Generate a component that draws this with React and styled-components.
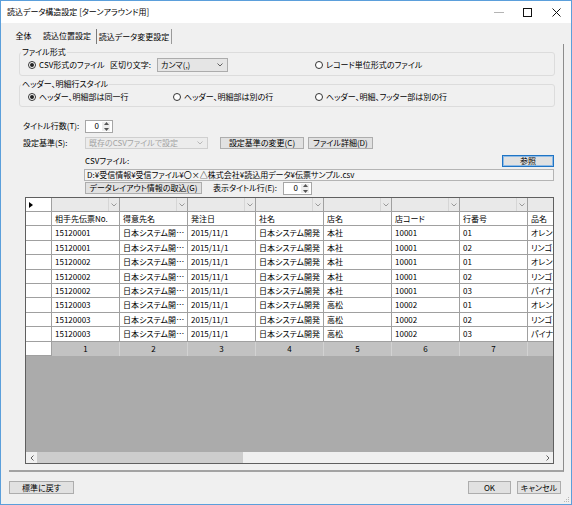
import React from "react";
import styled, { createGlobalStyle, css } from "styled-components";

const GlobalStyle = createGlobalStyle`
  html, body { margin: 0; padding: 0; background: #ffffff; }
  body {
    font-family: "Noto Sans CJK JP", "Noto Sans", sans-serif;
    font-size: 8px;
    line-height: 10px;
    color: #000;
    font-feature-settings: "palt" 1;
  }
  * { box-sizing: border-box; }
`;

const Window = styled.div`
  position: relative;
  width: 572px;
  height: 505px;
  border: 1px solid #5b9fdb;
  background: #f0f0f0;
  display: flex;
  flex-direction: column;
  overflow: hidden;
`;

const TitleBar = styled.div`
  height: 22px;
  flex: none;
  background: #ffffff;
  display: flex;
  align-items: center;
  padding-left: 6px;
`;

const Title = styled.div`
  flex: 1;
  white-space: nowrap;
`;

const Caption = styled.div`
  display: flex;
  height: 100%;
`;

const CaptionBtn = styled.div`
  width: ${(p) => p.$w}px;
  display: flex;
  align-items: center;
  justify-content: center;
`;

const TabStrip = styled.div`
  display: flex;
  height: 17px;
  flex: none;
  margin: 4px 0 0 8px;
`;

const Tab = styled.div`
  width: ${(p) => p.$w}px;
  display: flex;
  align-items: center;
  justify-content: center;
  white-space: nowrap;
  ${(p) =>
    p.$boxed &&
    css`
      margin-top: 2px;
      border-left: 1px solid #7a7a7a;
      border-right: 1px solid #9a9a9a;
    `}
`;

const Panel = styled.div`
  height: 428px;
  flex: none;
  margin: 0 7px 0 8px;
  border-right: 1px solid #8c8c8c;
  border-bottom: 2px solid #a3a3a3;
  padding: 3px 8px 0 10px;
  display: flex;
  flex-direction: column;
`;

const Group = styled.fieldset`
  margin: ${(p) => p.$mt}px 0 0;
  padding: ${(p) => p.$pt}px 0 ${(p) => p.$pb}px 8px;
  border: 1px solid #dcdcdc;
  border-radius: 3px;
  min-width: 0;
`;

const Legend = styled.legend`
  padding: 0 1px;
  margin-left: -7px;
  line-height: 10px;
`;

const RadioGrid = styled.div`
  display: grid;
  grid-template-columns: 145px 142px 1fr;
  align-items: center;
  height: ${(p) => p.$h}px;
`;

const FlexCell = styled.div`
  grid-column: span ${(p) => p.$span || 1};
  display: flex;
  align-items: center;
`;

const RadioLabel = styled.label`
  display: inline-flex;
  align-items: center;
  gap: 3px;
  white-space: nowrap;
  width: ${(p) => (p.$w ? `${p.$w}px` : "auto")};
`;

const RadioDot = styled.span`
  width: 8px;
  height: 8px;
  border-radius: 50%;
  border: 1px solid #333;
  background: #fff;
  display: flex;
  align-items: center;
  justify-content: center;
  &::after {
    content: "";
    width: 4px;
    height: 4px;
    border-radius: 50%;
    background: ${(p) => (p.$checked ? "#222" : "transparent")};
  }
`;

const InlineLabel = styled.span`
  width: ${(p) => p.$w}px;
  white-space: nowrap;
`;

const Select = styled.div`
  width: ${(p) => p.$w}px;
  height: ${(p) => p.$h}px;
  border: 1px solid ${(p) => (p.$disabled ? "#cfcfcf" : "#acacac")};
  background: ${(p) => (p.$disabled ? "#ececec" : "#e5e5e5")};
  color: ${(p) => (p.$disabled ? "#a3a3a3" : "#000")};
  display: flex;
  align-items: center;
  justify-content: space-between;
  padding: 0 4px 0 3px;
  white-space: nowrap;
`;

const FormRow = styled.div`
  display: flex;
  align-items: center;
  height: 12px;
  flex: none;
  margin-top: ${(p) => p.$mt}px;
  padding-left: ${(p) => p.$pl}px;
  padding-right: ${(p) => p.$pr || 0}px;
  justify-content: ${(p) => p.$justify || "flex-start"};
`;

const FieldLabel = styled.div`
  width: 62px;
  white-space: nowrap;
`;

const Button = styled.div`
  width: ${(p) => p.$w}px;
  height: ${(p) => p.$h || 12}px;
  margin-left: ${(p) => p.$ml || 0}px;
  border: 1px solid #adadad;
  background: #e1e1e1;
  display: flex;
  align-items: center;
  justify-content: center;
  white-space: nowrap;
  ${(p) =>
    p.$default &&
    css`
      border-color: #1f74c4;
      box-shadow: inset 0 0 0 1px #8fbbe6;
    `}
`;

const Spin = styled.div`
  width: ${(p) => p.$w}px;
  height: 13px;
  margin-left: ${(p) => p.$ml || 0}px;
  background: #fff;
  border: 1px solid #a6a6a6;
  display: flex;
  align-items: center;
  justify-content: flex-end;
  padding-right: 2px;
`;

const SpinValue = styled.span`
  margin-right: 3px;
`;

const SpinArrows = styled.div`
  width: 8px;
  height: 9px;
  display: flex;
  flex-direction: column;
  align-items: center;
  justify-content: space-between;
  background: #ededed;
`;

const PathBox = styled.div`
  height: 12px;
  flex: none;
  margin: 2px 1px 0 65px;
  border: 1px solid #b4b4b4;
  background: #f4f4f4;
  display: flex;
  align-items: center;
  padding-left: 2px;
  white-space: nowrap;
`;

const Grid = styled.div`
  margin: 3px 1px 0 6px;
  height: 267px;
  flex: none;
  border: 1px solid #5f5f5f;
  background: #ababab;
  display: flex;
  flex-direction: column;
  overflow: hidden;
`;

const Rows = styled.div`
  display: grid;
  grid-template-columns: 26px repeat(8, 68px);
  grid-template-rows: 14px;
  grid-auto-rows: 14.4px;
  background: #ffffff;
  flex: none;
`;

const Cell = styled.div`
  border-right: 1px solid #a0a0a0;
  border-bottom: 1px solid #a0a0a0;
  background: #ffffff;
  padding-left: 3px;
  line-height: 13.4px;
  white-space: nowrap;
  overflow: hidden;
  text-overflow: ${(p) => (p.$ellipsis ? "ellipsis" : "clip")};
`;

const ComboCell = styled.div`
  border-right: 1px solid #a0a0a0;
  border-bottom: 1px solid #a0a0a0;
  background: #e9e9e9;
  display: flex;
  justify-content: flex-end;
`;

const ComboButton = styled.div`
  width: 11px;
  border-left: 1px solid #d6d6d6;
  display: flex;
  align-items: center;
  justify-content: center;
`;

const RowHead = styled.div`
  border-right: 1px solid #a0a0a0;
  border-bottom: 1px solid #a0a0a0;
  background: #ffffff;
  display: flex;
  align-items: center;
  padding-left: 3px;
`;

const NumCell = styled.div`
  border-right: 1px solid #d2d2d2;
  background: #c2c2c2;
  text-align: center;
  line-height: 14.4px;
  white-space: nowrap;
`;

const EmptyArea = styled.div`
  flex: 1;
  background: #ababab;
`;

const HScroll = styled.div`
  height: 11px;
  flex: none;
  display: flex;
  background: #f0f0f0;
`;

const ScrollArrow = styled.div`
  width: 11px;
  display: flex;
  align-items: center;
  justify-content: center;
`;

const ScrollTrack = styled.div`
  flex: 1;
  display: flex;
`;

const ScrollThumb = styled.div`
  width: ${(p) => p.$w}px;
  background: #cdcdcd;
`;

const Footer = styled.div`
  flex: 1;
  display: flex;
  align-items: flex-start;
  gap: 6px;
  padding: 9px 10px 0 8px;
`;

const Spacer = styled.div`
  flex: 1;
`;

const Grip = styled.svg`
  position: absolute;
  right: 1px;
  bottom: 1px;
`;

const Chevron = ({ color = "#606060", w = 6 }) => (
  <svg width={w} height="4" viewBox="0 0 6 4">
    <path d="M0.5 0.5 L3 3 L5.5 0.5" fill="none" stroke={color} strokeWidth="1" />
  </svg>
);

const SpinControl = ({ w, ml }) => (
  <Spin $w={w} $ml={ml}>
    <SpinValue>0</SpinValue>
    <SpinArrows>
      <svg width="5" height="3" viewBox="0 0 5 3">
        <path d="M0 3 L2.5 0 L5 3 Z" fill="#555" />
      </svg>
      <svg width="5" height="3" viewBox="0 0 5 3">
        <path d="M0 0 L2.5 3 L5 0 Z" fill="#555" />
      </svg>
    </SpinArrows>
  </Spin>
);

const Radio = ({ checked, children, w }) => (
  <RadioLabel $w={w}>
    <RadioDot $checked={checked} />
    {children}
  </RadioLabel>
);

const columns = ["相手先伝票No.", "得意先名", "発注日", "社名", "店名", "店コード", "行番号", "品名"];

const rows = [
  ["15120001", "日本システム開発株式会社", "2015/11/1", "日本システム開発", "本社", "10001", "01", "オレンジジュース"],
  ["15120001", "日本システム開発株式会社", "2015/11/1", "日本システム開発", "本社", "10001", "02", "リンゴジュース"],
  ["15120002", "日本システム開発株式会社", "2015/11/1", "日本システム開発", "本社", "10001", "01", "オレンジジュース"],
  ["15120002", "日本システム開発株式会社", "2015/11/1", "日本システム開発", "本社", "10001", "02", "リンゴジュース"],
  ["15120002", "日本システム開発株式会社", "2015/11/1", "日本システム開発", "本社", "10001", "03", "パイナップル"],
  ["15120003", "日本システム開発株式会社", "2015/11/1", "日本システム開発", "高松", "10002", "01", "オレンジジュース"],
  ["15120003", "日本システム開発株式会社", "2015/11/1", "日本システム開発", "高松", "10002", "02", "リンゴジュース"],
  ["15120003", "日本システム開発株式会社", "2015/11/1", "日本システム開発", "高松", "10002", "03", "パイナップル"],
];

export default function App() {
  return (
    <>
      <GlobalStyle />
      <Window>
        <TitleBar>
          <Title>読込データ構造設定 [ターンアラウンド用]</Title>
          <Caption>
            <CaptionBtn $w={28}>
              <svg width="10" height="1" viewBox="0 0 10 1">
                <rect width="10" height="1" fill="#b4b4b4" />
              </svg>
            </CaptionBtn>
            <CaptionBtn $w={28}>
              <svg width="9" height="9" viewBox="0 0 9 9">
                <rect x="0.5" y="0.5" width="8" height="8" fill="none" stroke="#111" />
              </svg>
            </CaptionBtn>
            <CaptionBtn $w={30}>
              <svg width="9" height="9" viewBox="0 0 9 9">
                <path d="M0.5 0.5 L8.5 8.5 M8.5 0.5 L0.5 8.5" stroke="#111" strokeWidth="1" />
              </svg>
            </CaptionBtn>
          </Caption>
        </TitleBar>

        <TabStrip>
          <Tab $w={29}>全体</Tab>
          <Tab $w={58}>読込位置設定</Tab>
          <Tab $w={76} $boxed>読込データ変更設定</Tab>
        </TabStrip>

        <Panel>
          <Group $mt={0} $pt={1} $pb={3}>
            <Legend>ファイル形式</Legend>
            <RadioGrid $h={14}>
              <FlexCell $span={2}>
                <Radio checked w={82}>CSV形式のファイル</Radio>
                <InlineLabel $w={47}>区切り文字:</InlineLabel>
                <Select $w={71} $h={14}>
                  <span>カンマ(,)</span>
                  <Chevron />
                </Select>
              </FlexCell>
              <FlexCell>
                <Radio>レコード単位形式のファイル</Radio>
              </FlexCell>
            </RadioGrid>
          </Group>

          <Group $mt={3} $pt={2} $pb={3}>
            <Legend>ヘッダー、明細行スタイル</Legend>
            <RadioGrid $h={12}>
              <FlexCell>
                <Radio checked>ヘッダー、明細部は同一行</Radio>
              </FlexCell>
              <FlexCell>
                <Radio>ヘッダー、明細部は別の行</Radio>
              </FlexCell>
              <FlexCell>
                <Radio>ヘッダー、明細、フッター部は別の行</Radio>
              </FlexCell>
            </RadioGrid>
          </Group>

          <FormRow $mt={13} $pl={4}>
            <FieldLabel>タイトル行数(T):</FieldLabel>
            <SpinControl w={28} />
          </FormRow>

          <FormRow $mt={5} $pl={4}>
            <FieldLabel>設定基準(S):</FieldLabel>
            <Select $w={123} $h={12} $disabled>
              <span>既存のCSVファイルで設定</span>
              <Chevron color="#b8b8b8" />
            </Select>
            <Button $w={84} $ml={12}>設定基準の変更(C)</Button>
            <Button $w={65} $ml={4}>ファイル詳細(D)</Button>
          </FormRow>

          <FormRow $mt={6} $pl={66} $pr={1} $justify="space-between">
            <span>CSVファイル:</span>
            <Button $w={52} $default>参照</Button>
          </FormRow>

          <PathBox>D:¥受信情報¥受信ファイル¥〇×△株式会社¥読込用データ¥伝票サンプル.csv</PathBox>

          <FormRow $mt={1} $pl={66}>
            <Button $w={117}>データレイアウト情報の取込(G)</Button>
            <InlineLabel $w={70} style={{ marginLeft: 11 }}>表示タイトル行(E):</InlineLabel>
            <SpinControl w={29} />
          </FormRow>

          <Grid>
            <Rows>
              <RowHead>
                <svg width="4" height="6" viewBox="0 0 4 6">
                  <path d="M0 0 L4 3 L0 6 Z" fill="#000" />
                </svg>
              </RowHead>
              {columns.map((c) => (
                <ComboCell key={"cb" + c}>
                  <ComboButton>
                    <Chevron color="#9a9a9a" w={6} />
                  </ComboButton>
                </ComboCell>
              ))}

              <RowHead />
              {columns.map((c) => (
                <Cell key={"h" + c}>{c}</Cell>
              ))}

              {rows.map((r, i) => (
                <React.Fragment key={i}>
                  <RowHead />
                  {r.map((v, j) => (
                    <Cell key={j} $ellipsis={j === 1}>
                      {v}
                    </Cell>
                  ))}
                </React.Fragment>
              ))}

              <RowHead />
              {columns.map((c, i) => (
                <NumCell key={"n" + c}>{i < 7 ? i + 1 : ""}</NumCell>
              ))}
            </Rows>
            <EmptyArea />
            <HScroll>
              <ScrollArrow>
                <svg width="4" height="6" viewBox="0 0 4 6">
                  <path d="M3.5 0.5 L1 3 L3.5 5.5" fill="none" stroke="#606060" />
                </svg>
              </ScrollArrow>
              <ScrollTrack>
                <ScrollThumb $w={206} />
              </ScrollTrack>
              <ScrollArrow>
                <svg width="4" height="6" viewBox="0 0 4 6">
                  <path d="M0.5 0.5 L3 3 L0.5 5.5" fill="none" stroke="#606060" />
                </svg>
              </ScrollArrow>
            </HScroll>
          </Grid>
        </Panel>

        <Footer>
          <Button $w={65} $h={13}>標準に戻す</Button>
          <Spacer />
          <Button $w={43} $h={13}>OK</Button>
          <Button $w={44} $h={13}>キャンセル</Button>
        </Footer>

        <Grip width="6" height="6" viewBox="0 0 6 6">
          <rect x="4" y="0" width="1" height="1" fill="#b8b8b8" />
          <rect x="2" y="2" width="1" height="1" fill="#b8b8b8" />
          <rect x="4" y="2" width="1" height="1" fill="#b8b8b8" />
          <rect x="0" y="4" width="1" height="1" fill="#b8b8b8" />
          <rect x="2" y="4" width="1" height="1" fill="#b8b8b8" />
          <rect x="4" y="4" width="1" height="1" fill="#b8b8b8" />
        </Grip>
      </Window>
    </>
  );
}
